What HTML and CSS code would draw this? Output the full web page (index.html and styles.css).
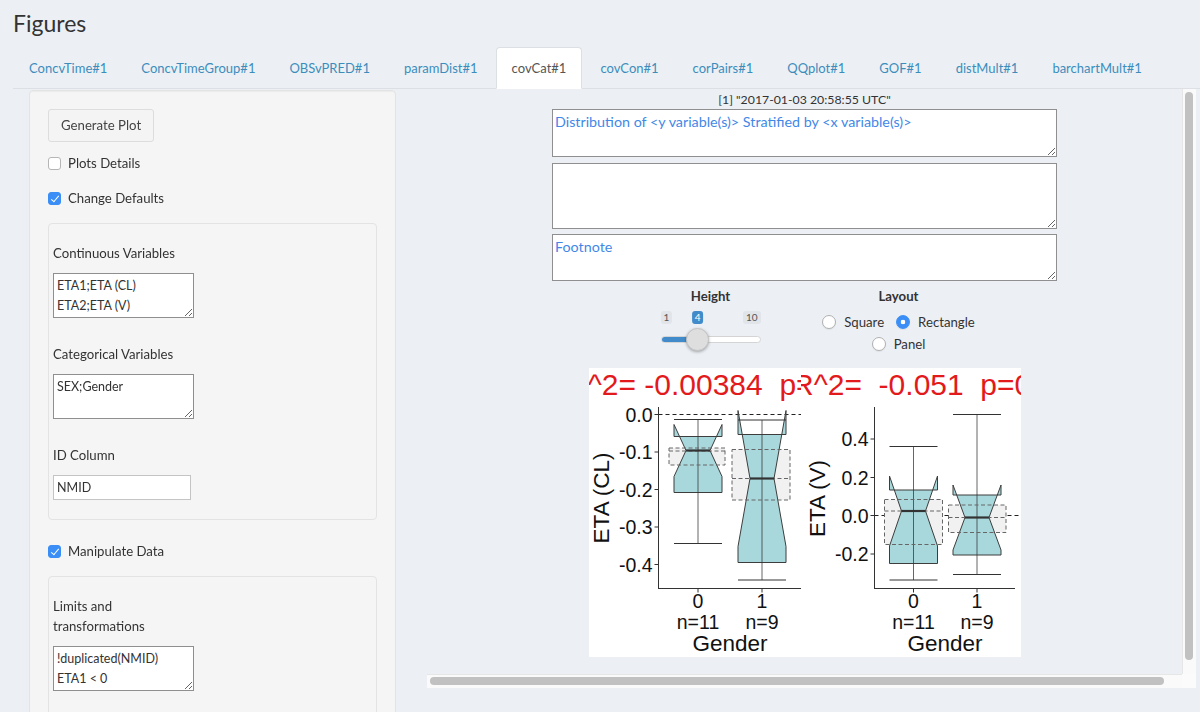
FILE: index.html
```html
<!DOCTYPE html>
<html>
<head>
<meta charset="utf-8">
<title>Figures</title>
<link rel="stylesheet" href="styles.css">
</head>
<body>
<div class="page">
  <h2 class="title">Figures</h2>
  <ul class="tabs">
    <li><a>ConcvTime#1</a></li>
    <li><a>ConcvTimeGroup#1</a></li>
    <li><a>OBSvPRED#1</a></li>
    <li><a>paramDist#1</a></li>
    <li class="active"><a>covCat#1</a></li>
    <li><a>covCon#1</a></li>
    <li><a>corPairs#1</a></li>
    <li><a>QQplot#1</a></li>
    <li><a>GOF#1</a></li>
    <li><a>distMult#1</a></li>
    <li><a>barchartMult#1</a></li>
  </ul>
  <div class="tab-content">
    <aside class="sidebar well">
      <button class="btn">Generate Plot</button>
      <label class="check"><input type="checkbox"><span>Plots Details</span></label>
      <label class="check"><input type="checkbox" checked><span>Change Defaults</span></label>
      <div class="well inner">
        <div class="field">
          <label class="flabel">Continuous Variables</label>
          <textarea class="lta" rows="2">ETA1;ETA (CL)
ETA2;ETA (V)</textarea>
        </div>
        <div class="field">
          <label class="flabel">Categorical Variables</label>
          <textarea class="lta" rows="2">SEX;Gender</textarea>
        </div>
        <div class="field">
          <label class="flabel">ID Column</label>
          <input class="lin" type="text" value="NMID">
        </div>
      </div>
      <label class="check check-gap"><input type="checkbox" checked><span>Manipulate Data</span></label>
      <div class="well inner inner-last">
        <div class="field">
          <label class="flabel">Limits and transformations</label>
          <textarea class="lta" rows="2">!duplicated(NMID)
ETA1 &lt; 0</textarea>
        </div>
      </div>
    </aside>

    <div class="scroll-frame">
      <main class="viewport">
        <div class="scroll-inner">
          <div class="col">
            <div class="stamp">[1] "2017-01-03 20:58:55 UTC"</div>
            <textarea class="rta rta1">Distribution of &lt;y variable(s)&gt; Stratified by &lt;x variable(s)&gt;</textarea>
            <textarea class="rta rta2"></textarea>
            <textarea class="rta rta3">Footnote</textarea>

            <div class="controls">
              <div class="ctrl">
                <div class="ctrl-label">Height</div>
                <div class="irs" style="--p:0.3333">
                  <div class="irs-minmax"><span class="irs-badge">1</span><span class="irs-badge">10</span></div>
                  <span class="irs-badge irs-value">4</span>
                  <div class="irs-line"><div class="irs-bar"></div></div>
                  <span class="irs-handle"></span>
                </div>
              </div>
              <div class="ctrl">
                <div class="ctrl-label">Layout</div>
                <div class="radios">
                  <label class="radio"><input type="radio" name="layout"><span>Square</span></label>
                  <label class="radio"><input type="radio" name="layout" checked><span>Rectangle</span></label>
                  <label class="radio"><input type="radio" name="layout"><span>Panel</span></label>
                </div>
              </div>
            </div>

            <svg class="plot" width="432" height="289" viewBox="0 0 432 289">
              <svg x="0" y="0" width="212" height="289">
                <text class="ttl" x="-23" y="27">R^2= -0.00384  p=0.802</text>
                <line class="zero" x1="69.5" y1="46.5" x2="212" y2="46.5"/>

                <rect class="gfill" x="80" y="80" width="56" height="17"/>
                <polygon class="box" points="85,68.5 85,56.5 97,82.5 85,108.5 85,124.5 133,124.5 133,108.5 121,82.5 133,56.5 133,68.5"/>
                <line class="whisk" x1="109" y1="51.5" x2="109" y2="175.5"/>
                <line class="cap" x1="85" y1="51.5" x2="133" y2="51.5"/>
                <line class="cap" x1="85" y1="175.5" x2="133" y2="175.5"/>
                <rect class="gline" x="80" y="80" width="56" height="17"/>
                <line class="gline" x1="80" y1="83" x2="136" y2="83"/>
                <line class="med" x1="97" y1="82.5" x2="121" y2="82.5"/>

                <rect class="gfill" x="143" y="81.5" width="58" height="50.5"/>
                <polygon class="box" points="149,66.5 149,42.5 161,110.5 149,178.5 149,194.5 197,194.5 197,178.5 185,110.5 197,42.5 197,66.5"/>
                <line class="whisk" x1="173" y1="52" x2="173" y2="212"/>
                <line class="cap" x1="149" y1="52" x2="197" y2="52"/>
                <line class="cap" x1="149" y1="212" x2="197" y2="212"/>
                <rect class="gline" x="143" y="81.5" width="58" height="50.5"/>
                <line class="gline" x1="143" y1="110.5" x2="201" y2="110.5"/>
                <line class="med" x1="161" y1="110.5" x2="185" y2="110.5"/>

                <line class="axis" x1="69.5" y1="39" x2="69.5" y2="221"/>
                <line class="axis" x1="69" y1="220.5" x2="212" y2="220.5"/>
                <line class="axis" x1="65.5" y1="46.5" x2="69.5" y2="46.5"/>
                <line class="axis" x1="65.5" y1="84" x2="69.5" y2="84"/>
                <line class="axis" x1="65.5" y1="121.5" x2="69.5" y2="121.5"/>
                <line class="axis" x1="65.5" y1="159" x2="69.5" y2="159"/>
                <line class="axis" x1="65.5" y1="196.5" x2="69.5" y2="196.5"/>
                <text class="tick" x="63.5" y="53.5">0.0</text>
                <text class="tick" x="63.5" y="91">-0.1</text>
                <text class="tick" x="63.5" y="128.5">-0.2</text>
                <text class="tick" x="63.5" y="166">-0.3</text>
                <text class="tick" x="63.5" y="203.5">-0.4</text>
                <line class="axis" x1="109" y1="220.5" x2="109" y2="224.5"/>
                <line class="axis" x1="173" y1="220.5" x2="173" y2="224.5"/>
                <text class="xl" x="109" y="240">0</text>
                <text class="xl" x="109" y="261">n=11</text>
                <text class="xl" x="173" y="240">1</text>
                <text class="xl" x="173" y="261">n=9</text>
                <text class="atitle" x="141" y="283">Gender</text>
                <text class="atitle" transform="translate(20,130) rotate(-90)">ETA (CL)</text>
              </svg>
              <svg x="212" y="0" width="220" height="289">
                <text class="ttl" x="-9" y="27">R^2=  -0.051  p=0.870</text>
                <line class="zero" x1="73.5" y1="147.5" x2="220" y2="147.5"/>

                <rect class="gfill" x="83.5" y="131.5" width="58" height="45"/>
                <polygon class="box" points="88.5,122 88.5,108 100.5,143 88.5,178 88.5,195.5 136.5,195.5 136.5,178 124.5,143 136.5,108 136.5,122"/>
                <line class="whisk" x1="112.5" y1="78.5" x2="112.5" y2="212"/>
                <line class="cap" x1="88.5" y1="78.5" x2="136.5" y2="78.5"/>
                <line class="cap" x1="88.5" y1="212" x2="136.5" y2="212"/>
                <rect class="gline" x="83.5" y="131.5" width="58" height="45"/>
                <line class="gline" x1="83.5" y1="143" x2="141.5" y2="143"/>
                <line class="med" x1="100.5" y1="143" x2="124.5" y2="143"/>

                <rect class="gfill" x="147.5" y="137" width="57.5" height="27.5"/>
                <polygon class="box" points="152,127 152,117 164,149.5 152,182 152,187 200,187 200,182 188,149.5 200,117 200,127"/>
                <line class="whisk" x1="176" y1="46.5" x2="176" y2="206.5"/>
                <line class="cap" x1="152" y1="46.5" x2="200" y2="46.5"/>
                <line class="cap" x1="152" y1="206.5" x2="200" y2="206.5"/>
                <rect class="gline" x="147.5" y="137" width="57.5" height="27.5"/>
                <line class="gline" x1="147.5" y1="149.5" x2="205" y2="149.5"/>
                <line class="med" x1="164" y1="149.5" x2="188" y2="149.5"/>

                <line class="axis" x1="73.5" y1="39" x2="73.5" y2="221"/>
                <line class="axis" x1="73" y1="220.5" x2="214" y2="220.5"/>
                <line class="axis" x1="69.5" y1="71" x2="73.5" y2="71"/>
                <line class="axis" x1="69.5" y1="109.5" x2="73.5" y2="109.5"/>
                <line class="axis" x1="69.5" y1="147.5" x2="73.5" y2="147.5"/>
                <line class="axis" x1="69.5" y1="186" x2="73.5" y2="186"/>
                <text class="tick" x="67.5" y="78">0.4</text>
                <text class="tick" x="67.5" y="116.5">0.2</text>
                <text class="tick" x="67.5" y="154.5">0.0</text>
                <text class="tick" x="67.5" y="193">-0.2</text>
                <line class="axis" x1="112.5" y1="220.5" x2="112.5" y2="224.5"/>
                <line class="axis" x1="176" y1="220.5" x2="176" y2="224.5"/>
                <text class="xl" x="112.5" y="240">0</text>
                <text class="xl" x="112.5" y="261">n=11</text>
                <text class="xl" x="176" y="240">1</text>
                <text class="xl" x="176" y="261">n=9</text>
                <text class="atitle" x="144" y="283">Gender</text>
                <text class="atitle" transform="translate(24,130.5) rotate(-90)">ETA (V)</text>
              </svg>
            </svg>
          </div>
        </div>
      </main>
      <div class="vbar"><div class="vthumb"></div></div>
      <div class="hbar"><div class="hthumb"></div></div>
      <div class="corner"></div>
    </div>
  </div>
</div>
</body>
</html>
```

FILE: styles.css
```css
* { box-sizing: border-box; }

html, body {
  margin: 0;
  height: 100%;
  overflow: hidden;
}

body {
  background: #ecf0f5;
  font-family: "Lato", "Liberation Sans", sans-serif;
  font-size: 13.2px;
  line-height: 20px;
  color: #333;
}

.title {
  margin: 0;
  padding: 9px 0 0 13px;
  font-size: 23px;
  line-height: 28px;
  font-weight: 400;
  color: #333;
}

/* ---------- tabs ---------- */
.tabs {
  list-style: none;
  margin: 10px 0 0 13px;
  padding: 0;
  display: flex;
  border-bottom: 1px solid #dcdfe3;
  font-size: 13px;
}
.tabs li { margin-bottom: -1px; }
.tabs a {
  display: block;
  padding: 10px 15px;
  margin-right: 2px;
  border: 1px solid transparent;
  border-radius: 4px 4px 0 0;
  color: #3c8dbc;
  line-height: 20px;
}
.tabs li.active a {
  background: #fff;
  border-color: #dcdfe3 #dcdfe3 transparent;
  color: #555;
}

.tab-content {
  display: flex;
  align-items: flex-start;
}

/* ---------- sidebar ---------- */
.well {
  background: #f5f5f5;
  border: 1px solid #e3e3e3;
  border-radius: 4px;
  box-shadow: inset 0 1px 1px rgba(0,0,0,0.04);
}
.sidebar {
  flex: none;
  width: 367px;
  margin: 1px 0 0 29px;
  padding: 18px 18px 30px;
}
.btn {
  display: block;
  height: 33px;
  padding: 6px 12px;
  font: inherit;
  line-height: 19px;
  color: #444;
  background: #f4f4f4;
  border: 1px solid #ddd;
  border-radius: 3px;
  margin-bottom: 11px;
}
.check {
  display: flex;
  align-items: center;
  gap: 7px;
  height: 20px;
  margin-bottom: 15px;
  color: #333;
}
.check-gap { margin-top: 21px; }
.check input {
  -webkit-appearance: none;
  appearance: none;
  flex: none;
  width: 13px;
  height: 13px;
  margin: 0;
  border: 1px solid #b5b5b5;
  border-radius: 3px;
  background: #fff;
  position: relative;
}
.check input:checked {
  background: #3b8ef5;
  border-color: #3b8ef5;
}
.check input:checked::after {
  content: "";
  position: absolute;
  left: 3.5px;
  top: 1px;
  width: 3px;
  height: 7px;
  border: solid #fff;
  border-width: 0 1.8px 1.8px 0;
  transform: rotate(40deg);
}

.inner {
  padding: 19px 4px 19px;
  box-shadow: none;
}
.inner-last { padding-bottom: 30px; }
.field { width: 140px; margin-bottom: 26px; }
.field:last-child { margin-bottom: 0; }
.flabel {
  display: block;
  line-height: 20px;
  margin-bottom: 10px;
  color: #333;
}
.lta {
  display: block;
  width: 141px;
  height: 45px;
  padding: 2px 3px;
  font-family: inherit;
  font-size: 12.5px;
  line-height: 20px;
  color: #333;
  border: 1px solid #8f8f8f;
  border-radius: 0;
  background: #fff;
}
.lin {
  display: block;
  width: 138px;
  height: 25px;
  padding: 2px 3px;
  font-family: inherit;
  font-size: 12.5px;
  color: #333;
  border: 1px solid #c4c4c4;
  border-radius: 0;
  background: #fff;
}

/* ---------- main scroll area ---------- */
.scroll-frame {
  flex: none;
  display: grid;
  grid-template-columns: 755px 14px;
  grid-template-rows: 585px 14px;
  margin-left: 31px;
}
.viewport {
  overflow: hidden;
}
.vbar {
  background: #fafafa;
  border-left: 1px solid #e6e6e6;
  padding: 3px 0 0 2px;
}
.vthumb {
  width: 8px;
  height: 568px;
  border-radius: 4px;
  background: #c1c1c1;
}
.hbar {
  background: #fafafa;
  border-top: 1px solid #e6e6e6;
  padding: 2px 0 0 3px;
}
.hthumb {
  width: 734px;
  height: 8px;
  border-radius: 4px;
  background: #c1c1c1;
}
.corner { background: #fbfbfb; }

.scroll-inner {
  width: 776px;
  padding: 0 21px 35px 0;
}
.col {
  width: 505px;
  margin: 0 auto;
}
.stamp {
  margin-top: 1px;
  height: 19px;
  line-height: 19px;
  font-size: 12.3px;
  text-align: center;
  color: #333;
}
.rta {
  display: block;
  width: 505px;
  padding: 2px 2px;
  font-family: inherit;
  font-size: 14.3px;
  line-height: 20px;
  color: #3f88e8;
  border: 1px solid #8f8f8f;
  background: #fff;
}
.rta1 { height: 48px; margin-bottom: 6px; }
.rta2 { height: 66px; margin-bottom: 5px; }
.rta3 { height: 47px; }

/* ---------- controls ---------- */
.controls {
  display: flex;
  justify-content: center;
  height: 87px;
  padding-top: 5px;
}
.ctrl {
  width: 188px;
  display: flex;
  flex-direction: column;
  align-items: center;
}
.ctrl-label {
  font-weight: 700;
  line-height: 20px;
  margin-bottom: 5px;
  color: #333;
}
.irs {
  position: relative;
  width: 100px;
  height: 42px;
}
.irs-minmax {
  display: flex;
  justify-content: space-between;
}
.irs-badge {
  display: block;
  font-size: 10px;
  line-height: 13px;
  padding: 0 3px;
  background: #e1e4e9;
  color: #555;
  border-radius: 3px;
}
.irs-value {
  position: absolute;
  top: 0;
  left: calc(11.5px + var(--p) * (100% - 23px));
  transform: translateX(-50%);
  background: #428bca;
  color: #fff;
}
.irs-line {
  margin-top: 12px;
  height: 7px;
  border: 1px solid #d4d4d4;
  border-radius: 4px;
  background: #fff;
  overflow: hidden;
}
.irs-bar {
  height: 100%;
  width: calc(11.5px + var(--p) * (100% - 23px));
  background: #428bca;
}
.irs-handle {
  position: absolute;
  top: 17px;
  left: calc(var(--p) * (100% - 23px));
  width: 23px;
  height: 23px;
  border-radius: 50%;
  background: #dedede;
  border: 1px solid #c3c3c3;
  box-shadow: 0 1px 3px rgba(0,0,0,0.3);
}
.radios {
  display: flex;
  flex-wrap: wrap;
  justify-content: center;
  column-gap: 12px;
  width: 188px;
}
.radio {
  display: flex;
  align-items: center;
  gap: 8px;
  height: 22px;
  color: #333;
}
.radio input {
  -webkit-appearance: none;
  appearance: none;
  flex: none;
  width: 14px;
  height: 14px;
  margin: 0;
  border: 1px solid #b0b0b0;
  border-radius: 50%;
  background: #fff;
  box-shadow: 0 1px 1px rgba(0,0,0,0.06);
}
.radio input:checked {
  border-color: #3b8ef5;
  background: radial-gradient(circle, #fff 0 2px, #3b8ef5 2.6px);
}

/* ---------- plot ---------- */
.plot {
  display: block;
  margin: 0 auto;
  background: #fff;
}
.plot text { font-family: "Liberation Sans", Arial, sans-serif; }
.ttl { font-size: 30px; fill: #e31a1c; white-space: pre; }
.tick { font-size: 19.5px; fill: #111; text-anchor: end; }
.xl { font-size: 19.5px; fill: #111; text-anchor: middle; }
.atitle { font-size: 22.5px; fill: #111; text-anchor: middle; }
.axis { stroke: #333; stroke-width: 1; }
.zero { stroke: #222; stroke-width: 1; stroke-dasharray: 4 3; }
.gfill { fill: #f1f1f1; }
.gline { fill: none; stroke: #666; stroke-width: 1; stroke-dasharray: 4 2.5; }
.box { fill: #a8d8dc; stroke: #3d3d3d; stroke-width: 1; }
.whisk { stroke: #333; stroke-opacity: 0.75; stroke-width: 1; }
.cap { stroke: #333; stroke-width: 1; }
.med { stroke: #333; stroke-width: 2.2; }
```
